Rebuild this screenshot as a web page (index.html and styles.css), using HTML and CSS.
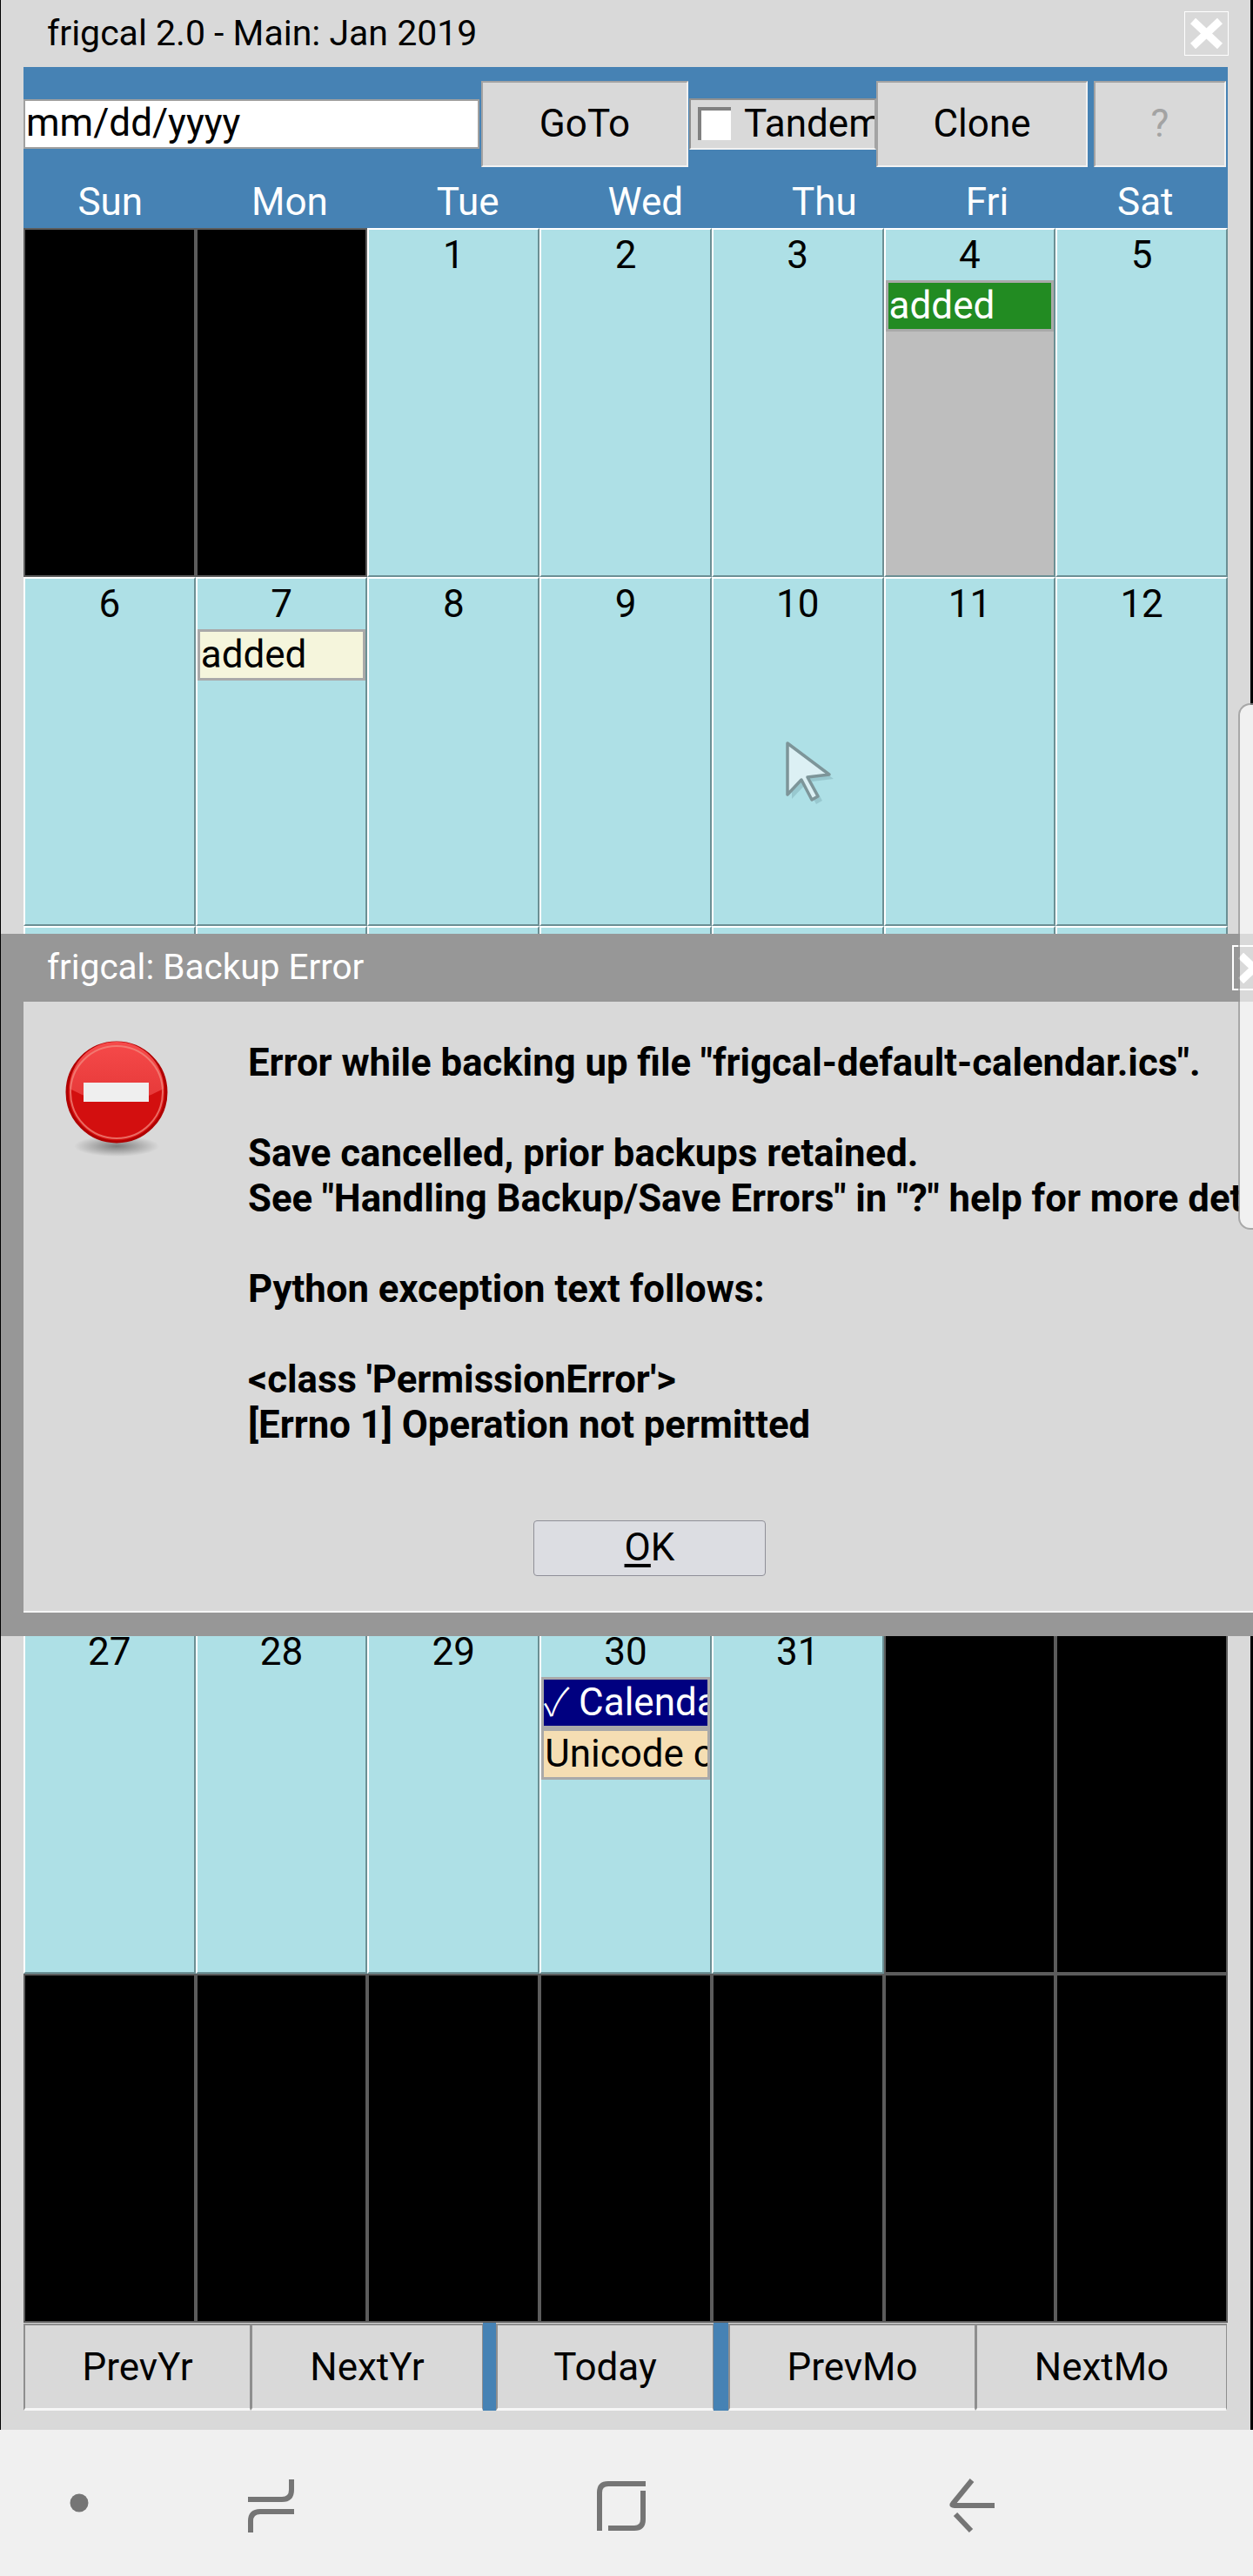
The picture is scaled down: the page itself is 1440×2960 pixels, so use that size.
FILE: index.html
```html
<!DOCTYPE html>
<html>
<head>
    <meta name='viewport' content='width=device-width, initial-scale=1'>
    <link rel="stylesheet" href="styles.css">
</head>
<body>
<div class="window">
    <div class="titlebar">
        <span class="title">frigcal 2.0 - Main: Jan 2019</span>
        <span class="closebox">
            <svg width="37" height="35" viewBox="0 0 37 35"><path d="M3 3L34 32M34 3L3 32" stroke="#fff" stroke-width="9" fill="none"/></svg>
        </span>
    </div>

    <div class="toolbar">
        <div class="dateinput">mm/dd/yyyy</div>
        <div class="btn goto">GoTo</div>
        <div class="tandem"><span class="checkbox"></span><span class="tandemlabel">Tandem</span></div>
        <div class="btn clone">Clone</div>
        <div class="btn help">?</div>
    </div>

    <div class="dayheads">
        <div>Sun</div><div>Mon</div><div>Tue</div><div>Wed</div><div>Thu</div><div>Fri</div><div>Sat</div>
    </div>

    <div class="grid">
        <div class="cell off"></div>
        <div class="cell off"></div>
        <div class="cell"><div class="day">1</div></div>
        <div class="cell"><div class="day">2</div></div>
        <div class="cell"><div class="day">3</div></div>
        <div class="cell"><div class="day">4</div><div class="events today"><div class="ev green">added</div></div></div>
        <div class="cell"><div class="day">5</div></div>

        <div class="cell"><div class="day">6</div></div>
        <div class="cell"><div class="day">7</div><div class="events"><div class="ev beige">added</div></div></div>
        <div class="cell"><div class="day">8</div></div>
        <div class="cell"><div class="day">9</div></div>
        <div class="cell"><div class="day">10</div></div>
        <div class="cell"><div class="day">11</div></div>
        <div class="cell"><div class="day">12</div></div>

        <div class="cell"><div class="day">13</div></div>
        <div class="cell"><div class="day">14</div></div>
        <div class="cell"><div class="day">15</div></div>
        <div class="cell"><div class="day">16</div></div>
        <div class="cell"><div class="day">17</div></div>
        <div class="cell"><div class="day">18</div></div>
        <div class="cell"><div class="day">19</div></div>

        <div class="cell"><div class="day">20</div></div>
        <div class="cell"><div class="day">21</div></div>
        <div class="cell"><div class="day">22</div></div>
        <div class="cell"><div class="day">23</div></div>
        <div class="cell"><div class="day">24</div></div>
        <div class="cell"><div class="day">25</div></div>
        <div class="cell"><div class="day">26</div></div>

        <div class="cell"><div class="day">27</div></div>
        <div class="cell"><div class="day">28</div></div>
        <div class="cell"><div class="day">29</div></div>
        <div class="cell"><div class="day">30</div><div class="events"><div class="ev navy"><span class="tick">✓</span> Calendar</div><div class="ev wheat">Unicode calendar</div></div></div>
        <div class="cell"><div class="day">31</div></div>
        <div class="cell off"></div>
        <div class="cell off"></div>

        <div class="cell off"></div>
        <div class="cell off"></div>
        <div class="cell off"></div>
        <div class="cell off"></div>
        <div class="cell off"></div>
        <div class="cell off"></div>
        <div class="cell off"></div>
    </div>

    <div class="bottombar">
        <div class="btn prevyr">PrevYr</div>
        <div class="btn nextyr">NextYr</div>
        <div class="gap gap1"></div>
        <div class="btn today-btn">Today</div>
        <div class="gap gap2"></div>
        <div class="btn prevmo">PrevMo</div>
        <div class="btn nextmo">NextMo</div>
    </div>
</div>

<div class="navbar">
    <svg class="navicons" width="1440" height="168" viewBox="0 0 1440 168">
        <circle cx="91" cy="84" r="10.5" fill="#757575"/>
        <g fill="none" stroke="#757575" stroke-width="6">
            <path d="M285 80H324Q335 80 335 69V57"/>
            <path d="M338 94H299Q288 94 288 105V118"/>
            <path d="M689 116V72Q689 62 699 62H742"/>
            <path d="M739 70V103Q739 113 729 113H699"/>
            <path d="M1117 58L1095 85Q1093 87 1097 87H1143"/>
            <path d="M1098 97L1116 116"/>
        </g>
    </svg>
</div>

<svg class="cursor" width="60" height="76" viewBox="0 0 60 76">
    <path d="M7 6L55 42L30 45L42 67L35 71L23 48L7 65Z" fill="#6f9ba3" opacity=".35" transform="translate(3 3)"/>
    <path d="M5 4L53 40L28 43L40 65L33 69L21 46L5 63Z" fill="#dcf0f4" stroke="#7d9599" stroke-width="3.5" stroke-linejoin="round"/>
</svg>

<div class="dialog">
    <div class="dialogtitle">
        <span>frigcal: Backup Error</span>
        <span class="dialogclose">
            <svg width="37" height="35" viewBox="0 0 37 35"><path d="M3 3L34 32M34 3L3 32" stroke="#fff" stroke-width="9" fill="none"/></svg>
        </span>
    </div>
    <div class="dialogbody">
        <svg class="erroricon" width="130" height="136" viewBox="0 0 130 136">
            <defs>
                <radialGradient id="shade" cx="50%" cy="50%" r="50%">
                    <stop offset="0" stop-color="#555" stop-opacity=".7"/>
                    <stop offset="1" stop-color="#555" stop-opacity="0"/>
                </radialGradient>
                <linearGradient id="gloss" x1="0" y1="0" x2="0" y2="1">
                    <stop offset="0" stop-color="#f64a4a"/>
                    <stop offset="1" stop-color="#e53838"/>
                </linearGradient>
            </defs>
            <ellipse cx="65" cy="122" rx="49" ry="12" fill="url(#shade)"/>
            <circle cx="65" cy="60" r="57" fill="#d30f0f" stroke="#b00000" stroke-width="3"/>
            <path d="M11 56A54 54 0 0 1 119 56Q65 86 11 56Z" fill="url(#gloss)"/>
            <circle cx="65" cy="60" r="53" fill="none" stroke="#f28a7f" stroke-width="2" opacity=".75"/>
            <rect x="27" y="49" width="75" height="22" fill="#efefef"/>
        </svg>
        <div class="message">
            <p>Error while backing up file "frigcal-default-calendar.ics".</p>
            <p>&nbsp;</p>
            <p>Save cancelled, prior backups retained.</p>
            <p>See "Handling Backup/Save Errors" in "?" help for more details.</p>
            <p>&nbsp;</p>
            <p>Python exception text follows:</p>
            <p>&nbsp;</p>
            <p>&lt;class 'PermissionError'&gt;</p>
            <p>[Errno 1] Operation not permitted</p>
        </div>
        <div class="okbutton"><u>O</u>K</div>
    </div>
</div>

<div class="edgehandle"></div>
</body>
</html>
```

FILE: styles.css
```css
* {
    box-sizing: border-box;
}

html, body {
    margin: 0;
    padding: 0;
}

body {
    position: relative;
    width: 1440px;
    height: 2960px;
    overflow: hidden;
    background: #000;
    font-family: Roboto, sans-serif;
    color: #000;
}

.window {
    width: 1436px;
    height: 2792px;
    margin-left: 1px;
    padding: 0 26px;
    background: #d9d9d9;
}

.titlebar {
    height: 77px;
    display: flex;
    justify-content: space-between;
    align-items: flex-start;
    margin-left: 27px;
    font-size: 41px;
}

.title {
    line-height: 77px;
}

.closebox {
    width: 51px;
    height: 51px;
    margin-top: 13px;
    margin-right: -1px;
    border: 1px solid #fff;
    display: flex;
    align-items: center;
    justify-content: center;
}

.toolbar {
    height: 115px;
    padding-top: 15px;
    display: flex;
    align-items: center;
    background: #4682b4;
    font-size: 44px;
}

.btn {
    height: 99px;
    display: flex;
    align-items: center;
    justify-content: center;
    background: #d9d9d9;
    border: 2px solid;
    border-color: #a3a3a3 #f2f2f2 #f2f2f2 #a3a3a3;
}

.dateinput {
    width: 524px;
    height: 57px;
    line-height: 51px;
    padding-left: 1px;
    margin-right: 2px;
    background: #fff;
    border: 2px solid #a0a0a0;
}

.goto {
    width: 238px;
    margin-right: 1px;
}

.tandem {
    width: 215px;
    height: 59px;
    padding-left: 8px;
    display: flex;
    align-items: center;
    overflow: hidden;
    white-space: nowrap;
    background: #d9d9d9;
    border: 2px solid;
    border-color: #909090 #a3a3a3 #f2f2f2 #909090;
}

.checkbox {
    flex: none;
    width: 38px;
    height: 38px;
    margin-right: 15px;
    background: #fff;
    border-top: 4px solid #808080;
    border-left: 4px solid #808080;
}

.clone {
    width: 243px;
    margin-right: 7px;
}

.help {
    width: 152px;
    color: #a3a3a3;
}

.dayheads {
    height: 70px;
    padding-top: 9px;
    display: flex;
    background: #4682b4;
    color: #fff;
    font-size: 44px;
    line-height: 62px;
    text-align: center;
}

/* headers are not the grid's columns: each one is its text plus an equal share */
.dayheads div {
    flex: 1 1 auto;
}

.grid {
    height: 2407px;
    display: grid;
    grid-template-columns: repeat(7, 1fr);
    grid-template-rows: repeat(6, 1fr);
}

.cell {
    display: flex;
    flex-direction: column;
    min-width: 0;
    min-height: 0;
    overflow: hidden;
    background: #aee0e6;
    border: 2px solid;
    border-color: #fff #6b8f94 #6b8f94 #fff;
}

.cell.off {
    background: #000;
    border-color: #5c5c5c;
}

.day {
    height: 58px;
    flex: none;
    font-size: 44px;
    line-height: 58px;
    text-align: center;
}

.events.today {
    flex: 1;
    background: #bebebe;
}

.ev {
    height: 59px;
    padding-left: 1px;
    font-size: 44px;
    line-height: 52px;
    white-space: nowrap;
    overflow: hidden;
    border: 3px solid #a9a9a9;
}

.ev.green {
    background: #228b22;
    color: #fff;
}

.ev.beige {
    background: #f5f5dc;
}

.ev.navy {
    background: #000080;
    color: #fff;
    padding-left: 0;
}

.ev.wheat {
    background: #f5deb3;
}

.tick {
    font-family: "Noto Sans CJK JP", sans-serif;
    font-weight: 300;
    line-height: 0;
}

.bottombar {
    height: 101px;
    padding-top: 1px;
    display: flex;
    font-size: 44px;
}

.bottombar .btn {
    height: 100px;
    border-color: #8e8e8e #8e8e8e #f7f7f7 #8e8e8e;
    border-width: 2px 1px 3px 2px;
}

.gap {
    margin-top: -1px;
    background: #4682b4;
}

.gap1 { width: 15px; }
.gap2 { width: 17px; }

.prevyr { width: 261px; }
.nextyr { width: 267px; }
.today-btn { width: 250px; }
.prevmo { width: 284px; }
.nextmo { width: 289px; }

.navbar {
    height: 168px;
    background: #f0f0f0;
}

.navicons {
    display: block;
}

.cursor {
    position: absolute;
    left: 900px;
    top: 850px;
}

.dialog {
    position: absolute;
    left: 1px;
    right: 0;
    top: 1073px;
    height: 807px;
    overflow: hidden;
    background: #979797;
}

.dialogtitle {
    height: 78px;
    padding-left: 53px;
    display: flex;
    justify-content: space-between;
    color: #fff;
    font-size: 40.5px;
    line-height: 76px;
}

.dialogclose {
    flex: none;
    width: 51px;
    height: 52px;
    margin-top: 13px;
    margin-right: -27px;
    border: 2px solid #fff;
    display: flex;
    align-items: center;
    justify-content: center;
}

.dialogbody {
    position: relative;
    height: 702px;
    margin-left: 26px;
    padding: 44px 0 0 258px;
    background: #d9d9d9;
    border-bottom: 2px solid #f7f7f7;
}

.erroricon {
    position: absolute;
    left: 42px;
    top: 44px;
}

.message {
    width: 1139px;
    overflow: hidden;
    font-size: 43.7px;
    font-weight: 700;
    line-height: 52px;
    white-space: nowrap;
}

.message p {
    margin: 0;
}

.okbutton {
    position: absolute;
    left: 586px;
    top: 596px;
    width: 267px;
    height: 64px;
    text-align: center;
    font-size: 44px;
    line-height: 60px;
    background: #dcdde2;
    border: 1px solid #8f8f98;
    border-radius: 4px;
}

.okbutton u {
    text-decoration-thickness: 4px;
    text-underline-offset: 4px;
}

.edgehandle {
    position: absolute;
    right: 0;
    top: 808px;
    width: 17px;
    height: 605px;
    background: rgba(255, 255, 255, .63);
    border: 2px solid rgba(0, 0, 0, .3);
    border-right: 0;
    border-radius: 14px 0 0 14px;
}

/* the black strip right of the window does not show through the handle */
.edgehandle::before {
    content: "";
    position: absolute;
    right: 0;
    top: 0;
    width: 3px;
    height: 263px;
    background: #f0f0f0;
}
```
